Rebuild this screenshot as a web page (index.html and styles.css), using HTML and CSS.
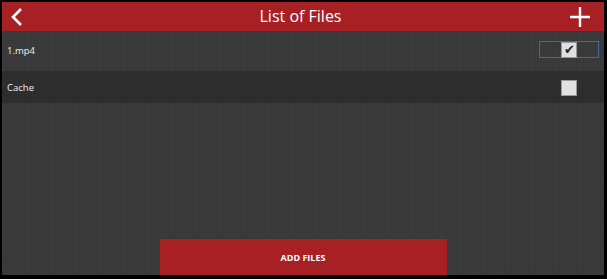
FILE: index.html
```html
<!DOCTYPE html>
<html><head>
<meta charset="utf-8">
<link rel="stylesheet" href="styles.css">
</head>
<body>
  <div class="screen">
    <header class="top-bar">
      <button class="bar-icon">
        <svg width="12" height="18" viewBox="0 0 12 18"><path d="M10 1 L2 9 L10 17" fill="none" stroke="#fff" stroke-width="2.6"/></svg>
      </button>
      <div class="title">List of Files</div>
      <button class="bar-icon">
        <svg width="20" height="20" viewBox="0 0 20 20"><path d="M10 0 V20 M0 10 H20" stroke="#fff" stroke-width="2.4"/></svg>
      </button>
    </header>
    <div class="file-list">
      <div class="file-row">
        <span class="file-name">1.mp4</span>
        <span class="check-focus"><span class="check checked">&#10004;</span></span>
      </div>
      <div class="file-row dark">
        <span class="file-name">Cache</span>
        <span class="check-focus plain"><span class="check"></span></span>
      </div>
    </div>
    <div class="footer">
      <button class="add-button">ADD FILES</button>
    </div>
  </div>
</body>
</html>
```
FILE: styles.css
```css
html, body{
  margin:0;
  height:100%;
  background:#000;
}
body{
  padding:2px 3px 4px 2px;
  box-sizing:border-box;
  font-family:"Open Sans","Noto Sans",sans-serif;
}
.screen{
  height:100%;
  display:flex;
  flex-direction:column;
  background-color:#393939;
  background-image:repeating-linear-gradient(90deg, rgba(255,255,255,0.025) 0 1px, transparent 1px 3px),
                   repeating-linear-gradient(0deg, rgba(0,0,0,0.05) 0 1px, transparent 1px 3px);
}
.top-bar{
  height:29px;
  background:#a62024;
  display:flex;
  align-items:center;
  justify-content:space-between;
  padding:0 14px 0 9px;
}
.bar-icon{
  background:none;
  border:0;
  padding:0;
  display:flex;
}
.title{
  color:#fff;
  font-size:16px;
  line-height:29px;
  margin-left:8px;
}
.file-row{
  display:flex;
  align-items:center;
  justify-content:space-between;
  height:40px;
  padding:0 5px 0 5px;
}
.file-row.dark{
  height:32px;
  background:rgba(0,0,0,0.2);
}
.file-name{
  color:#f0f0f0;
  font-size:9.5px;
  margin-top:-2px;
}
.file-row.dark .file-name{
  margin-top:0;
}
.check-focus{
  width:58px;
  height:15px;
  border:1px solid #4a6a99;
  display:flex;
  justify-content:center;
  align-items:center;
  margin-top:-3px;
}
.check-focus.plain{
  border-color:transparent;
  margin-top:2px;
}
.check{
  width:16px;
  height:16px;
  background:#e0e0e0;
  border:1px solid #9a9a9a;
  box-sizing:border-box;
  display:flex;
  align-items:center;
  justify-content:center;
  color:#222;
  font-size:13px;
  line-height:1;
}
.file-list{
  display:flex;
  flex-direction:column;
}
.footer{
  flex:1;
  display:flex;
  justify-content:center;
  align-items:flex-end;
}
.add-button{
  width:287px;
  height:36px;
  background:#a62024;
  border:0;
  color:#fff;
  font-family:"Open Sans","Noto Sans",sans-serif;
  font-weight:bold;
  font-size:9px;
}
```
